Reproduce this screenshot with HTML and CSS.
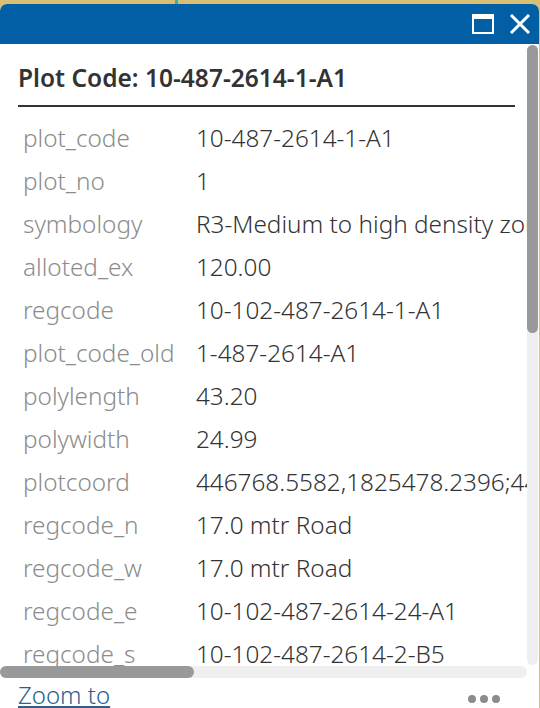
FILE: index.html
```html
<!DOCTYPE html>
<html>
<head>
<meta charset="utf-8">
<link rel="stylesheet" href="styles.css">
</head>
<body>
<div class="popup">
  <div class="header">
    <span class="hbtn max" title="Dock">
      <svg width="22" height="20" viewBox="0 0 22 20"><rect x="1" y="1" width="20" height="18" fill="none" stroke="#fff" stroke-width="2"/><rect x="1" y="1" width="20" height="4" fill="#fff"/></svg>
    </span>
    <span class="hbtn close" title="Close">
      <svg width="22" height="20" viewBox="0 0 22 20"><path d="M2 1 L20 19 M20 1 L2 19" stroke="#fff" stroke-width="3" fill="none"/></svg>
    </span>
  </div>
  <div class="body">
    <div class="scroll-row">
      <div class="viewport">
        <div class="title">Plot Code: 10-487-2614-1-A1</div>
        <div class="attrs">
          <div class="k">plot_code</div><div class="v">10-487-2614-1-A1</div>
          <div class="k">plot_no</div><div class="v">1</div>
          <div class="k">symbology</div><div class="v">R3-Medium to high density zone</div>
          <div class="k">alloted_ex</div><div class="v">120.00</div>
          <div class="k">regcode</div><div class="v">10-102-487-2614-1-A1</div>
          <div class="k">plot_code_old</div><div class="v">1-487-2614-A1</div>
          <div class="k">polylength</div><div class="v">43.20</div>
          <div class="k">polywidth</div><div class="v">24.99</div>
          <div class="k">plotcoord</div><div class="v">446768.5582,1825478.2396;446790.1234</div>
          <div class="k">regcode_n</div><div class="v">17.0 mtr Road</div>
          <div class="k">regcode_w</div><div class="v">17.0 mtr Road</div>
          <div class="k">regcode_e</div><div class="v">10-102-487-2614-24-A1</div>
          <div class="k">regcode_s</div><div class="v">10-102-487-2614-2-B5</div>
        </div>
      </div>
      <div class="vtrack"><div class="vthumb"></div></div>
    </div>
    <div class="hrow"><div class="htrack"><div class="hthumb"></div></div></div>
  </div>
  <div class="footer">
    <a class="zoom" href="#">Zoom to</a>
    <span class="more"><i></i><i></i><i></i></span>
  </div>
</div>
<div class="marker"></div>
</body>
</html>
```
FILE: styles.css
```css
html, body {
  margin: 0;
  padding: 0;
  background: #d9bf76;
  width: 540px;
  height: 708px;
  overflow: hidden;
  font-family: "Noto Sans", Lato, sans-serif;
}
.marker {
  position: absolute;
  left: 175px;
  top: 0;
  width: 3px;
  height: 4px;
  background: #2bb5ad;
}
.popup {
  margin-top: 4px;
  width: 539px;
  height: 704px;
  background: #fff;
  border-radius: 7px 7px 0 0;
  overflow: hidden;
  display: flex;
  flex-direction: column;
}
.header {
  height: 40px;
  flex: none;
  background: #035fa5;
  display: flex;
  justify-content: flex-end;
  align-items: center;
  gap: 15px;
  padding-right: 8px;
}
.hbtn { display: flex; }
.body {
  flex: none;
  display: flex;
  flex-direction: column;
}
.scroll-row {
  display: flex;
  height: 622px;
}
.viewport {
  width: 527px;
  overflow: hidden;
  padding-left: 18px;
  box-sizing: border-box;
}
.title {
  width: 497px;
  font-weight: 600;
  font-size: 24.5px;
  line-height: 32px;
  color: #333;
  padding-top: 18px;
  padding-bottom: 11px;
  border-bottom: 2px solid #333;
  white-space: nowrap;
}
.attrs {
  display: grid;
  grid-template-columns: 178px max-content;
  grid-auto-rows: 43px;
  align-items: center;
  margin-top: 9px;
  white-space: nowrap;
  font-size: 24.3px;
  font-weight: 300;
  line-height: 32px;
}
.attrs .k {
  color: #8c8c8c;
  padding-left: 5px;
}
.attrs .v {
  color: #333;
}
.vtrack {
  width: 11px;
  height: 620px;
  margin-top: 1px;
  background: #efefef;
  border-radius: 6px;
}
.vthumb {
  height: 288px;
  background: #999;
  border-radius: 6px;
}
.hrow {
  display: flex;
  height: 12px;
}
.htrack {
  width: 527px;
  height: 12px;
  background: #efefef;
  border-radius: 6px;
}
.hthumb {
  width: 194px;
  height: 12px;
  background: #999;
  border-radius: 6px;
}
.footer {
  flex: 1;
  display: flex;
  justify-content: space-between;
  align-items: flex-start;
  padding: 4px 39px 0 18px;
}
.zoom {
  color: #2e5f8e;
  font-size: 24px;
  font-weight: 300;
  line-height: 26px;
  text-decoration: underline;
  text-decoration-thickness: 2px;
  text-underline-offset: 2px;
}
.more {
  display: flex;
  gap: 4px;
  padding-top: 13px;
}
.more i {
  display: block;
  width: 8px;
  height: 8px;
  border-radius: 50%;
  background: #8c8c8c;
}
```
